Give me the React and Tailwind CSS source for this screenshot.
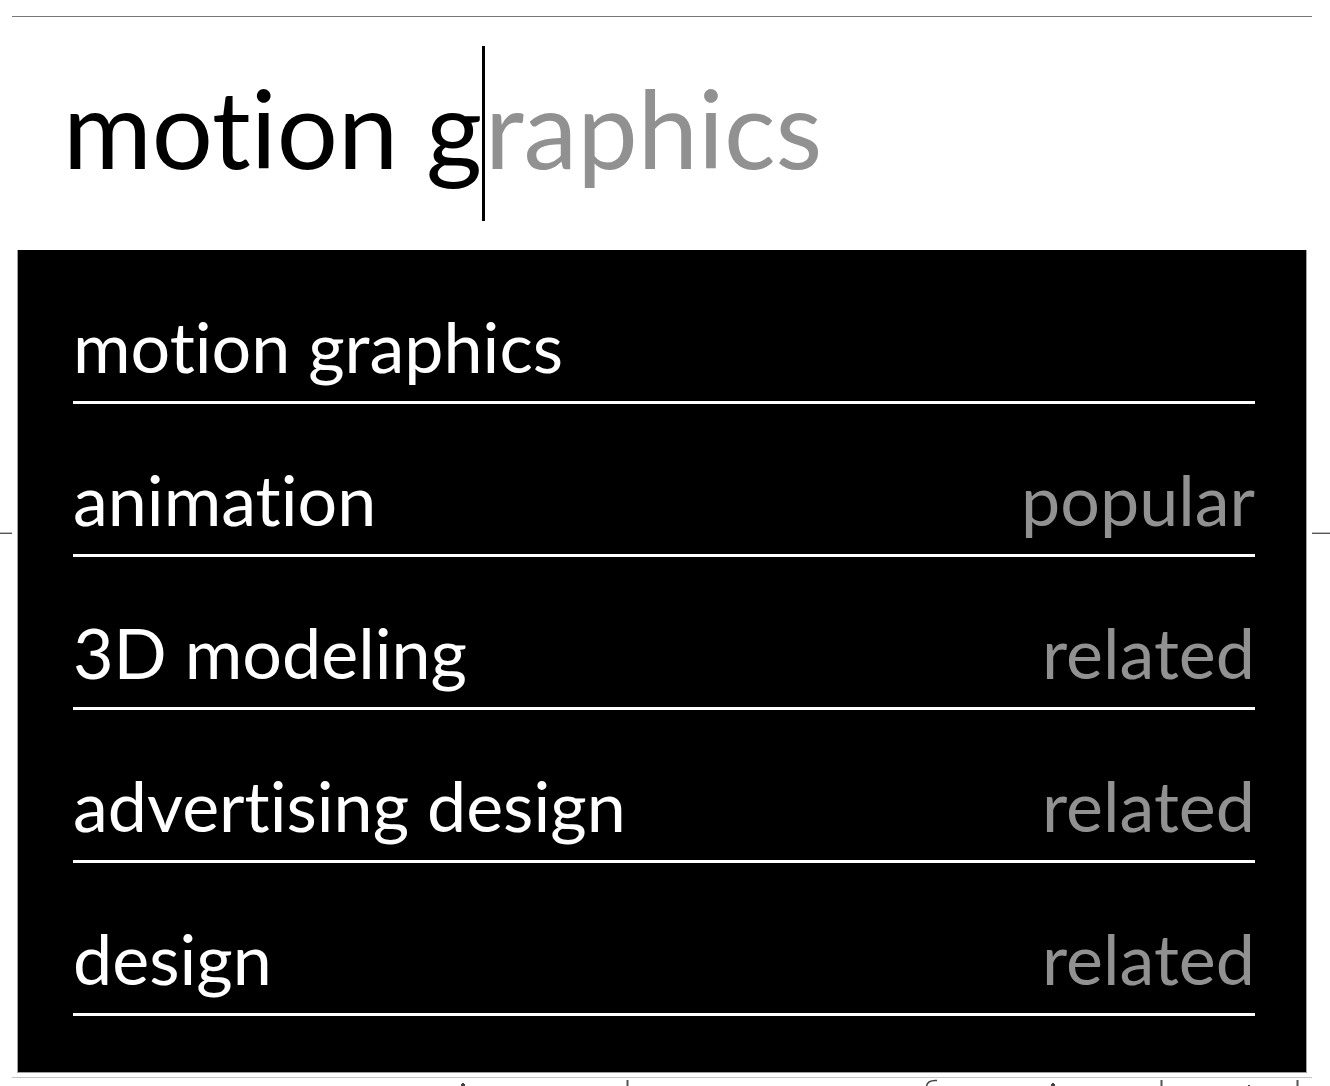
import { useState } from "react";

const suggestions = [
  { text: "motion graphics", tag: "" },
  { text: "animation", tag: "popular" },
  { text: "3D modeling", tag: "related" },
  { text: "advertising design", tag: "related" },
  { text: "design", tag: "related" },
];

function SearchBar() {
  const [query, setQuery] = useState("motion g");
  const full = "motion graphics";
  const rest = full.startsWith(query) ? full.slice(query.length) : "";
  return (
    <label className="flex h-[233px] items-start px-[51px] pt-[29px] text-[108px] leading-[162px] whitespace-pre">
      <input
        type="text"
        aria-label="Search"
        value={query}
        onChange={(e) => setQuery(e.target.value)}
        className="field-sizing-content h-[162px] bg-transparent p-0 text-black caret-transparent outline-none"
      />
      <span className="h-[175px] w-[3px] shrink-0 bg-black" />
      <span className="text-[#919191]">{rest}</span>
    </label>
  );
}

function Suggestions() {
  return (
    <ul className="mr-[5px] ml-[5px] border-r border-b border-l border-[#a0a0a0] bg-black pt-px pr-[51px] pb-[56px] pl-[55px] text-[70px]">
      {suggestions.map((s) => (
        <li key={s.text}>
          <button
            type="button"
            className="flex h-[153px] w-full items-end justify-between border-b-3 border-white pb-[15px] text-left leading-[80px]"
          >
            <span className="text-white">{s.text}</span>
            <span className="text-[#919191]">{s.tag}</span>
          </button>
        </li>
      ))}
    </ul>
  );
}

function SideLine() {
  return <div className="mt-[532px] h-[2px] border-b border-[#555] bg-[#bbb]" />;
}

function Fragments() {
  return (
    <svg viewBox="0 0 1300 8" className="block h-2 w-full" preserveAspectRatio="xMinYMin slice" aria-hidden="true">
      <g fill="#444">
        <path d="M449 8V6h1V5h2v1h1v2z" />
        <path d="M1039 8V6h1V5h2v1h1v2z" />
        <path d="M1236 7h2v1h-2z" />
      </g>
      <path d="M914.500 8c.5-3 3.500-6 10.500-5.500" fill="none" stroke="#444" strokeWidth="1.500" />
      <g fill="#aaa">
        <path d="M614 2h3v6h-3zM1148 2h3v6h-3zM1284 2h3v6h-3z" />
      </g>
      <g fill="#555">
        <path d="M615 2h1v6h-1zM1149 2h1v6h-1zM1285 2h1v6h-1z" />
      </g>
    </svg>
  );
}

export default function App() {
  return (
    <div className="grid grid-cols-[12px_1fr_18px] bg-white font-['Lato',sans-serif] [font-variant-ligatures:none]">
      <SideLine />
      <main className="mt-[16px] min-w-0 border-t border-[#777]">
        <SearchBar />
        <Suggestions />
        <div className="mt-1 border-t border-[#c4c4c4]">
          <Fragments />
        </div>
      </main>
      <SideLine />
    </div>
  );
}
